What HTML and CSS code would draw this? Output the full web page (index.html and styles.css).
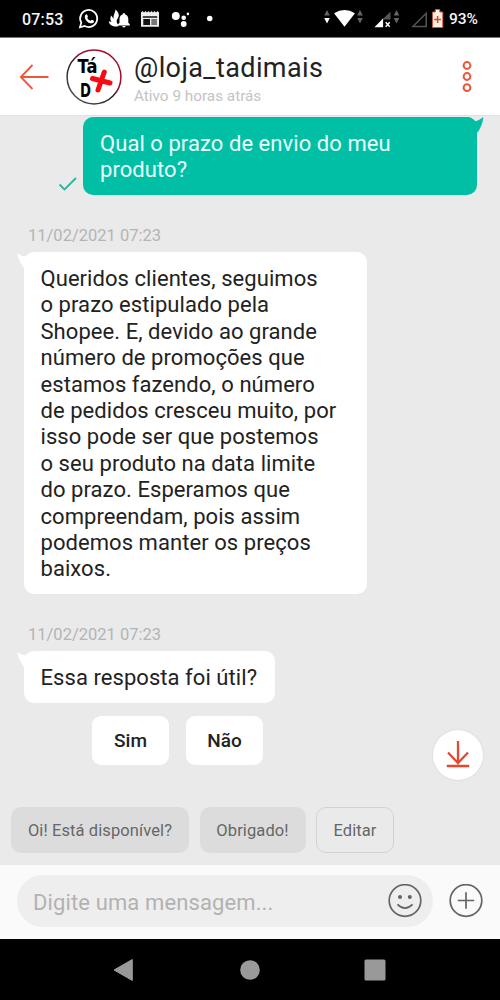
FILE: index.html
```html
<!DOCTYPE html>
<html lang="pt-BR">
<head>
<meta charset="utf-8">
<meta name="viewport" content="width=device-width, initial-scale=1">
<title>Chat</title>
<link rel="stylesheet" href="styles.css">
</head>
<body>
<div class="phone">
  <div class="status">
    <span class="status-time">07:53</span>
    <svg class="status-left" width="172" height="37" viewBox="70 0 172 37">
      <path d="M80 27.300l1.300-4.600A8.500 8.500 0 1 1 84.700 26z" fill="none" stroke="#fff" stroke-width="1.8"/>
      <path d="M85.300 14.900c.8-1 1.700-.8 2 0l.6 1.500c.2.600-.8 1.300-.6 1.700.7 1.300 1.800 2.200 3.200 2.700.5.100 1-1.200 1.500-1l1.900.9c.5.300-.1 2-1.500 2.500-3.500 1.200-9.300-4.200-7.100-8.300z" fill="#fff"/>
      <path d="M115.500 9.500c3.800 3.300 4 6.500 2.200 9-.8 1-1.500 2.800-.6 4.500l1.500 3c-5 1.800-9.800-1.500-9.800-4.800l2.700.8c-1.700-2.300-1.300-4.500-.3-6.500l2.500 3.500c-.7-3.500 1.200-5.500 1.800-9.500z" fill="#fff"/>
      <path d="M118 25.500v-1.300l1.500-1.500v-3.700c0-2.500 1.300-4.200 3.200-4.600v-.7q1.200-1.400 2.400 0v.7c1.900.4 3.200 2.100 3.200 4.600v3.700l1.500 1.500v1.300zM122 26h3.800q-1.900 3-3.800 0z" fill="#fff"/>
      <path d="M141 12.500h18v14.200h-18zM141 12.500l1.500-1.500 1.500 1.500 1.500-1.500 1.500 1.500 1.500-1.500 1.500 1.500 1.500-1.500 1.500 1.500 1.500-1.500 1.500 1.500 1.500-1.500 1.500 1.500z" fill="#eee"/>
      <path d="M142.800 16.300h14.400v1.400h-14.400zM143.300 19h6.700v6h-6.700z" fill="#111"/>
      <path d="M151.300 19h5.700v6h-5.700z" fill="#777"/>
      <g fill="#fff"><circle cx="175.800" cy="16" r="4"/><circle cx="183.700" cy="17.700" r="2.300"/><circle cx="187.900" cy="13.900" r="1.300"/><circle cx="183.700" cy="24" r="2.900"/><circle cx="209.700" cy="18.500" r="2.800"/></g>
    </svg>
    <svg class="status-right" width="124" height="37" viewBox="322 0 124 37">
      <path d="M324.200 15.500l2.800-5.500 2.800 5.500zM357.200 15.500l2.800-5.500 2.800 5.500zM357.200 18h5.600L360 23.500zM393.700 15.500l2.800-5.500 2.800 5.500zM393.700 18h5.600l-2.800 5.500z" fill="#656565"/>
      <path d="M324.200 18h5.600L327 23.500zM334 13.200q10.500-6.500 21 0L344.500 26.700z" fill="#fff"/>
      <path d="M390.500 11.500v15.500H375z" fill="#555"/>
      <path d="M374.500 27.300l8.700-9v9z" fill="#fff"/>
      <path d="M383.200 19.500h8v8h-8z" fill="#000"/>
      <path d="M385.700 22.300l4 4.500m0-4.500l-4 4.500" stroke="#fff" stroke-width="1.500"/>
      <path d="M426.200 13.200v13.200H413z" fill="none" stroke="#555" stroke-width="1.500"/>
      <path d="M432.500 12h2.800v-2.500h4.500V12h3v15.500h-10.300z" fill="#fff1df" stroke="#c65348"/>
      <path d="M434.200 19.500h6.800m-3.400-3.400v6.800" stroke="#d84333" stroke-width="1.500"/>
    </svg>
    <span class="status-battery">93%</span>
  </div>

  <header class="header">
    <svg class="back" width="30" height="26" viewBox="0 0 30 26"><path d="M13.500 1L1.800 13 13.500 25M1.800 13H29.500" fill="none" stroke="#ee5639" stroke-width="1.800"/></svg>
    <svg class="avatar" width="56" height="56" viewBox="0 0 56 56">
      <defs><linearGradient id="ring" x1="1" y1="0" x2="0.200" y2="1"><stop offset="0" stop-color="#a60624"/><stop offset=".42" stop-color="#9c1030"/><stop offset=".6" stop-color="#251c20"/><stop offset="1" stop-color="#555"/></linearGradient></defs>
      <circle cx="28" cy="28" r="26.900" fill="#fff" stroke="url(#ring)" stroke-width="1.500"/>
      <text class="logo-text" x="11.500" y="24" textLength="20" lengthAdjust="spacingAndGlyphs">Tá</text>
      <text class="logo-text" x="14" y="48" textLength="11" lengthAdjust="spacingAndGlyphs">D</text>
      <path d="M26.500 29.500L44 34M38.300 23L32 41" stroke="#f40b13" stroke-width="5" stroke-linecap="round"/>
    </svg>
    <div class="who">
      <div class="name">@loja_tadimais</div>
      <div class="seen">Ativo 9 horas atrás</div>
    </div>
    <svg class="more" width="12" height="34" viewBox="0 0 12 34"><g fill="none" stroke="#ee5639" stroke-width="2"><circle cx="6" cy="5.500" r="3.400"/><circle cx="6" cy="16.500" r="3.400"/><circle cx="6" cy="27.700" r="3.400"/></g></svg>
  </header>

  <main class="chat">
    <div class="sent-row">
      <svg class="check" width="20" height="16" viewBox="0 0 20 16"><path d="M1.500 8.500L6.500 13.500 18 2" fill="none" stroke="#2db59e" stroke-width="1.800"/></svg>
      <div class="bubble sent">Qual o prazo de envio do meu<br>produto?<svg class="tail-right" width="17" height="20" viewBox="0 0 17 20"><path d="M0 0Q4 0 8.500 4.300Q12 3.500 16.500 0Q15 10 10 16V20H0z" fill="#00bfa5"/></svg></div>
    </div>
    <div class="date">11/02/2021 07:23</div>
    <div class="bubble received long"><svg class="tail-left" width="18" height="20" viewBox="0 0 18 20"><path d="M0 1Q4 4 8 4.500L14 2V20H7V16Q2 10 0 1z" fill="#fff"/></svg>Queridos clientes, seguimos<br>o prazo estipulado pela<br>Shopee. E, devido ao grande<br>número de promoções que<br>estamos fazendo, o número<br>de pedidos cresceu muito, por<br>isso pode ser que postemos<br>o seu produto na data limite<br>do prazo. Esperamos que<br>compreendam, pois assim<br>podemos manter os preços<br>baixos.</div>
    <div class="date">11/02/2021 07:23</div>
    <div class="bubble received short"><svg class="tail-left" width="18" height="20" viewBox="0 0 18 20"><path d="M0 1Q4 4 8 4.500L14 2V20H7V16Q2 10 0 1z" fill="#fff"/></svg>Essa resposta foi útil?</div>
    <div class="answer-row">
      <button class="answer">Sim</button>
      <button class="answer">Não</button>
      <button class="scroll-down" aria-label="Ir para o fim"><svg width="24" height="30" viewBox="0 0 24 30"><path d="M12 1V23M2 12.500L12 23 22 12.500M.8 26H23.200" fill="none" stroke="#e5482e" stroke-width="2.300"/></svg></button>
    </div>
    <div class="chips">
      <button class="chip first">Oi! Está disponível?</button>
      <button class="chip second">Obrigado!</button>
      <button class="chip edit">Editar</button>
    </div>
  </main>

  <div class="composer">
    <div class="field">
      <span class="placeholder">Digite uma mensagem...</span>
      <svg width="34" height="34" viewBox="0 0 34 34"><g fill="none" stroke="#646464" stroke-width="1.700"><circle cx="17" cy="16.500" r="15.800"/><path d="M9.500 20.300Q17 28 24.500 20.300"/></g><g fill="#646464"><circle cx="12" cy="12.900" r="2"/><circle cx="21.800" cy="12.900" r="2"/></g></svg>
    </div>
    <svg class="plus" width="34" height="34" viewBox="0 0 34 34"><g fill="none" stroke="#646464" stroke-width="1.700"><circle cx="17" cy="16.500" r="15.800"/><path d="M8.800 16.500H25.200M17 8.300V24.700"/></g></svg>
  </div>

  <nav class="nav">
    <svg width="20" height="24" viewBox="0 0 20 24"><path d="M1 12L19.300 1.500V22.500z" fill="#999" stroke="#999" stroke-linejoin="round"/></svg>
    <svg width="20" height="20" viewBox="0 0 20 20"><circle cx="10" cy="10" r="9.800" fill="#999"/></svg>
    <svg width="22" height="22" viewBox="0 0 22 22"><rect x=".5" y=".5" width="21" height="21" rx="1.500" fill="#999"/></svg>
  </nav>
</div>
</body>
</html>
```

FILE: styles.css
```css
* { box-sizing: border-box; }
body { margin: 0; font-family: Roboto, sans-serif; }
svg { display: block; flex: none; }
button { border: 0; padding: 0; font-family: inherit; }
.phone { width: 500px; height: 1000px; display: flex; flex-direction: column; overflow: hidden; }

.status { height: 38px; flex: none; background: #000; border-bottom: 1px solid #777; color: #f5f5f5; display: flex; align-items: center; padding-left: 22px; font-size: 16px; font-weight: 500; white-space: nowrap; }
.status-time { width: 48px; padding-top: 2px; letter-spacing: .2px; }
.status-right { margin-left: 80px; }
.status-battery { padding: 1px 0 0 3px; font-size: 15.500px; }

.header { height: 77px; flex: none; display: flex; align-items: center; background: #fff; padding: 0 27px 0 19px; }
.avatar { margin-left: 17px; }
.logo-text { font-family: "DejaVu Sans", sans-serif; font-size: 20px; font-weight: 700; fill: #000; }
.who { margin-left: 12px; flex: 1; white-space: nowrap; }
.name { font-size: 27px; letter-spacing: .4px; line-height: 32px; color: #222; padding-top: 5px; }
.seen { font-size: 15.300px; line-height: 20px; color: #c4c4c4; margin-top: 2px; }

.chat { height: 750px; flex: none; background: #eaeaea; padding-top: 1px; border-top: 1px solid #e2e2e2; }
.bubble { position: relative; border-radius: 10px; font-size: 22px; letter-spacing: .06px; line-height: 26.400px; white-space: nowrap; }
.sent-row { display: flex; align-items: flex-end; padding-left: 58px; height: 78px; }
.check { margin: 0 5px 3px 0; }
.sent { width: 394px; height: 78px; padding: 14px 17px; background: #00bfa5; color: #eafffb; }
.tail-right { position: absolute; right: -7px; top: 0; }
.tail-left { position: absolute; left: -7px; top: 0; }
.date { height: 24px; margin: 29px 0 0 28px; font-size: 16.500px; line-height: 24px; color: #b4b4b4; }
.received { margin-left: 24px; padding: 14px 16.500px; background: #fff; color: #222; }
.long { width: 343px; height: 342px; margin-top: 4px; }
.short { width: 251px; height: 52px; margin-top: 4px; }
.answer-row { display: flex; align-items: flex-start; height: 64px; margin-top: 13px; padding-left: 92px; gap: 17px; }
.answer { width: 77px; height: 49px; border-radius: 9px; background: #fff; font-size: 19px; font-weight: 500; color: #222; }
.scroll-down { width: 50px; height: 50px; margin: 14px 0 0 153px; border-radius: 50%; background: #fff; box-shadow: 0 0 2px #ccc; display: flex; align-items: center; justify-content: center; }
.chips { display: flex; gap: 10.500px; margin: 27px 0 0 11px; }
.chip { height: 46px; border-radius: 10px; background: #dcdcdc; font-size: 16.500px; letter-spacing: .1px; color: #666; white-space: nowrap; }
.first { width: 178px; }
.second { width: 106px; }
.edit { width: 78px; background: #eaeaea; border: 1px solid #d2d2d2; }

.composer { height: 74px; flex: none; background: #fafafa; display: flex; align-items: center; padding: 0 0 2px 17px; }
.field { width: 416px; height: 52px; border-radius: 26px; background: #eee; display: flex; align-items: center; justify-content: space-between; padding: 0 11px 0 16px; }
.placeholder { font-size: 22px; letter-spacing: .12px; padding-top: 2px; color: #b2b2b2; white-space: nowrap; }
.plus { margin-left: 16px; }
.nav { height: 61px; flex: none; background: #000; display: flex; align-items: center; padding-left: 113px; gap: 107px; }
.nav svg:last-child { margin-left: -3px; }
```
